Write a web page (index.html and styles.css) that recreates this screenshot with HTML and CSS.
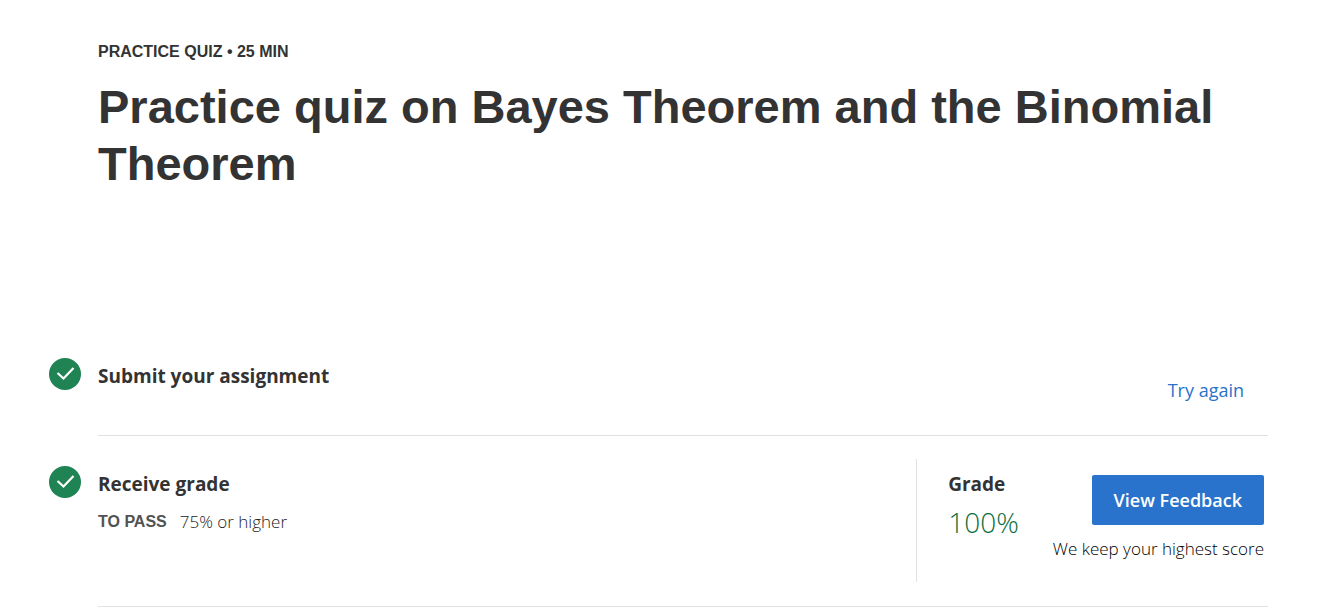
FILE: index.html
```html
<!DOCTYPE html>
<html lang="en">
<head>
<meta charset="utf-8">
<title>Practice quiz</title>
<link rel="stylesheet" href="styles.css">
</head>
<body>
<main class="page">
  <header class="header">
    <p class="kicker">PRACTICE QUIZ • 25 MIN</p>
    <h1 class="title">Practice quiz on Bayes Theorem and the Binomial Theorem</h1>
  </header>
  <section class="row">
    <svg class="check" viewBox="0 0 32 32" aria-hidden="true"><circle cx="16" cy="16" r="16" fill="#1f8354"/><path d="M8.500 15l6 5.500L24.500 10" fill="none" stroke="#fff" stroke-width="2.200"/></svg>
    <div class="body submit">
      <h2 class="heading">Submit your assignment</h2>
      <a class="retry" href="#">Try again</a>
    </div>
  </section>
  <section class="row">
    <svg class="check check-low" viewBox="0 0 32 32" aria-hidden="true"><circle cx="16" cy="16" r="16" fill="#1f8354"/><path d="M8.500 15l6 5.500L24.500 10" fill="none" stroke="#fff" stroke-width="2.200"/></svg>
    <div class="body receive">
      <div class="info">
        <h2 class="heading">Receive grade</h2>
        <p class="pass"><strong class="label">TO PASS</strong><span>75% or higher</span></p>
      </div>
      <div class="result">
        <div class="grade">
          <h2 class="heading">Grade</h2>
          <p class="score">100%</p>
        </div>
        <div class="feedback">
          <button class="button" type="button">View Feedback</button>
          <p class="note">We keep your highest score</p>
        </div>
      </div>
    </div>
  </section>
</main>
</body>
</html>
```
FILE: styles.css
```css
* { box-sizing: border-box; }
body { margin: 0; background: #fff; color: #333; font-family: "Open Sans", sans-serif; }
h1, h2, p { margin: 0; }
.page { padding: 40px 68px 0 49px; }
.header { padding: 0 0 0 49px; min-height: 295px; }
.kicker { font: bold 16px/24px "Liberation Sans", Arial, sans-serif; }
.title { margin-top: 14px; font: bold 47px/57px "Liberation Sans", Arial, sans-serif; }
.row { display: flex; gap: 17px; }
.check { flex: none; width: 32px; height: 32px; margin-top: 23px; }
.check-low { margin-top: 30px; }
.body { flex: 1; border-bottom: 1px solid #e1e1e1; }
.heading { font-size: 19px; line-height: 24px; font-weight: 700; }
.submit { display: flex; justify-content: space-between; padding: 29px 24px 31px 0; }
.retry { margin-top: 13px; color: #2a73cc; font-size: 18px; line-height: 27px; text-decoration: none; font-weight: 500; }
.receive { display: flex; justify-content: space-between; padding: 23px 4px 24px 0; }
.info { padding-top: 13px; }
.pass { display: flex; gap: 13px; margin-top: 14px; font-size: 17px; line-height: 24px; color: #222; font-weight: 300; }
.label { font: bold 16px/24px "Liberation Sans", Arial, sans-serif; color: #525252; }
.result { display: flex; gap: 34px; border-left: 1px solid #e1e1e1; padding: 13px 0 21px 31px; }
.score { margin-top: 6px; color: #0c7040; font-size: 28px; line-height: 40px; font-weight: 300; }
.feedback { display: flex; flex-direction: column; align-items: flex-end; padding-top: 3px; }
.button { height: 50px; padding: 0 22px; border: 0; border-radius: 2px; background: #2a73cc; color: #fff; font: 600 18px/24px "Open Sans", sans-serif; }
.note { margin-top: 12px; font-size: 17px; line-height: 24px; font-weight: 300; color: #000; }
```
